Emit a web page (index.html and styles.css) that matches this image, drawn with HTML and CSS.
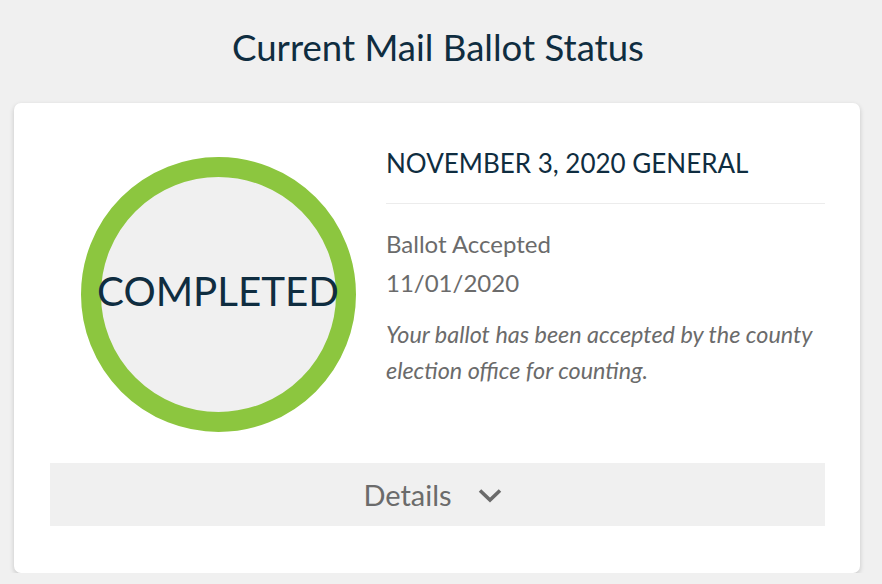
FILE: index.html
```html
<!DOCTYPE html>
<html>
<head>
<meta charset="utf-8">
<link rel="stylesheet" href="styles.css">
</head>
<body>
<h1 class="page-title">Current Mail Ballot Status</h1>
<div class="card">
  <div class="card-row">
    <div class="status-col">
      <div class="status-ring"><span class="status-text">COMPLETED</span></div>
    </div>
    <div class="info-col">
      <h2 class="election">NOVEMBER 3, 2020 GENERAL</h2>
      <div class="divider"></div>
      <div class="status-label">Ballot Accepted</div>
      <div class="status-date">11/01/2020</div>
      <p class="status-desc">Your ballot has been accepted by the county election office for counting.</p>
    </div>
  </div>
  <div class="details-bar">
    <span class="details-text">Details</span>
    <svg class="chevron" width="24" height="15" viewBox="0 0 24 15"><path d="M2 2.5 L12 12 L22 2.5" fill="none" stroke="#6b6b6b" stroke-width="3.6"/></svg>
  </div>
</div>
</body>
</html>
```
FILE: styles.css
```css
html, body {
  margin: 0;
  padding: 0;
  background: #f0f0f0;
  font-family: Lato, "Open Sans", sans-serif;
}
.page-title {
  margin: 0;
  padding-top: 25px;
  height: 103px;
  box-sizing: border-box;
  text-align: center;
  font-weight: 400;
  font-size: 36.6px;
  line-height: 44px;
  color: #0f2d40;
  padding-right: 6px;
}
.card {
  margin: 0 22px 0 14px;
  background: #fff;
  border-radius: 7px;
  box-shadow: 0 2px 5px rgba(0,0,0,0.18);
  padding: 45px 35px 47px 36px;
}
.card-row {
  display: flex;
}
.status-col {
  width: 336px;
  display: flex;
  justify-content: center;
  padding-top: 9px;
}
.status-ring {
  width: 275px;
  height: 275px;
  box-sizing: border-box;
  border: 20px solid #8cc63f;
  border-radius: 50%;
  background: #f0f0f0;
  display: flex;
  align-items: center;
  justify-content: center;
}
.status-text {
  font-size: 40.3px;
  color: #0f2d40;
  white-space: nowrap;
  margin-top: -8px;
}
.info-col {
  flex: 1;
}
.election {
  margin: 0;
  font-weight: 400;
  font-size: 26px;
  line-height: 31px;
  color: #0f2d40;
}
.divider {
  height: 1px;
  background: #ececec;
  margin: 24px 0 20px;
}
.status-label, .status-date {
  font-size: 24px;
  line-height: 39px;
  color: #6b6b6b;
}
.status-desc {
  margin: 14px 0 0;
  font-style: italic;
  font-size: 23.4px;
  line-height: 36px;
  color: #6b6b6b;
}
.details-bar {
  margin-top: 31px;
  height: 63px;
  background: #f0f0f0;
  display: flex;
  align-items: center;
  justify-content: center;
  gap: 26px;
}
.details-text {
  font-size: 29px;
  color: #6b6b6b;
}
.chevron {
  display: block;
  margin-top: 1px;
  margin-right: 10px;
}
```
